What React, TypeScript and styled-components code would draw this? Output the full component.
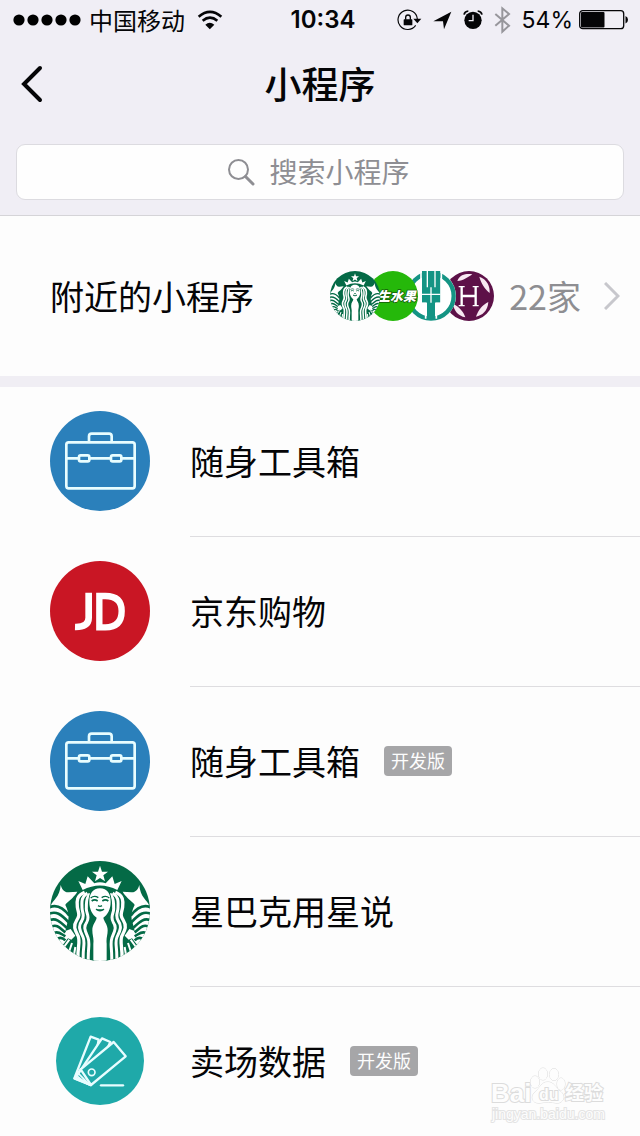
import React from "react";
import styled, { createGlobalStyle } from "styled-components";

const GlobalStyle = createGlobalStyle`
  *, *::before, *::after { box-sizing: border-box; }
  body {
    margin: 0;
    background: #fdfdfd;
    color: #050507;
    font-family: "Noto Sans CJK SC", sans-serif;
  }
`;

const Page = styled.div`
  position: relative;
  width: 100%;
  overflow: hidden;
`;

const Header = styled.header`
  background: #f0eef5;
  border-bottom: 1px solid #d5d4d8;
`;

const StatusBar = styled.div`
  display: grid;
  grid-template-columns: 1fr auto 1fr;
  align-items: center;
  height: 40px;
  padding: 0 11px 0 13px;
  font-family: Inter, "Noto Sans CJK SC", sans-serif;
  font-size: 24px;
  line-height: 40px;
`;

const Carrier = styled.div`
  display: flex;
  align-items: center;
  gap: 8px;
`;

const CarrierName = styled.span`
  font-family: "Noto Sans CJK SC", sans-serif;
  margin-right: 4px;
`;

const Time = styled.time`
  padding-left: 4px;
  font-weight: 600;
`;

const Indicators = styled.div`
  display: flex;
  align-items: center;
  justify-content: flex-end;
  gap: 11px;
`;

const Power = styled.div`
  display: flex;
  align-items: center;
  gap: 6px;
  font-size: 23px;
`;

const NavBar = styled.div`
  display: grid;
  grid-template-columns: 64px 1fr 64px;
  align-items: center;
  height: 88px;
`;

const BackButton = styled.button`
  display: flex;
  justify-content: center;
  padding: 0;
  border: 0;
  background: none;
  color: inherit;
`;

const Title = styled.h1`
  margin: 0;
  padding-bottom: 2px;
  font-size: 37px;
  line-height: 48px;
  font-weight: 500;
  text-align: center;
`;

const SearchArea = styled.div`
  padding: 16px 16px 15px;
`;

const SearchBox = styled.label`
  display: flex;
  align-items: center;
  justify-content: center;
  gap: 15px;
  height: 56px;
  border: 1px solid #dcdbe0;
  border-radius: 9px;
  background: #fefefe;
  color: #8e8e93;
`;

const SearchInput = styled.input`
  width: 144px;
  height: 40px;
  padding: 0 0 2px;
  border: 0;
  outline: 0;
  background: none;
  color: inherit;
  font: inherit;
  font-size: 28px;
  &::placeholder { color: #8e8e93; opacity: 1; }
`;

const NearbyLink = styled.a`
  display: flex;
  align-items: center;
  height: 160px;
  padding: 0 20px 0 50px;
  color: inherit;
  text-decoration: none;
`;

const Label = styled.span`
  padding-bottom: 1px;
  font-size: 34px;
  line-height: 48px;
`;

const Stack = styled.span`
  display: flex;
  margin-left: auto;
`;

const StackItem = styled.span<{ $order: number }>`
  position: relative;
  z-index: ${(p) => p.$order};
  display: flex;
  & + & { margin-left: -12px; }
`;

const Count = styled.span`
  margin: 0 23px 0 15px;
  padding-bottom: 1px;
  color: #8e8e92;
  font-size: 34px;
  line-height: 48px;
`;

const Band = styled.div`
  height: 11px;
  background: #f0eef4;
`;

const List = styled.ul`
  margin: 0;
  padding: 0;
  list-style: none;
`;

const RowLink = styled.a`
  display: flex;
  gap: 40px;
  padding-left: 50px;
  color: inherit;
  text-decoration: none;
`;

const IconSlot = styled.span<{ $last: boolean }>`
  display: flex;
  align-items: center;
  justify-content: center;
  flex: none;
  width: 100px;
  padding-bottom: ${(p) => (p.$last ? 1 : 2)}px;
`;

const RowBody = styled.span<{ $last: boolean }>`
  display: flex;
  flex: 1;
  align-items: center;
  gap: 24px;
  height: ${(p) => (p.$last ? 149 : 150)}px;
  padding-bottom: 1px;
  border-bottom: ${(p) => (p.$last ? "0" : "1px solid #dedde0")};
`;

const Badge = styled.span`
  height: 30px;
  padding: 0 7px;
  border-radius: 4px;
  background: #a6a6a8;
  color: #fdfdfd;
  font-size: 18px;
  line-height: 28px;
`;

const Watermark = styled.div`
  position: absolute;
  right: 32px;
  bottom: 12px;
  display: flex;
`;

const SignalIcon = () => (
  <svg width="68" height="12" viewBox="0 0 68 12" aria-hidden="true">
    {[6, 20, 34, 48, 62].map((x) => (
      <circle key={x} cx={x} cy="6" r="5.6" />
    ))}
  </svg>
);

const WifiIcon = () => (
  <svg width="26" height="20" viewBox="593 30 78 60" fill="none" stroke="#050507" aria-hidden="true">
    <path d="M598 50 Q632 21 666 50" strokeWidth="8" />
    <path d="M610 62 Q632 44 654 62" strokeWidth="8" />
    <path d="M618 74 Q631 63 645 74 L631.500 88 Z" fill="#050507" stroke="none" />
  </svg>
);

const RotationLockIcon = () => (
  <svg width="25" height="24" viewBox="234 24 75 72" fill="none" stroke="#050507" strokeWidth="3.500" aria-hidden="true">
    <path d="M290 76 A29 29 0 1 1 295 57" />
    <path d="M283 56 H307 L295 70 Z" fill="#050507" stroke="none" />
    <rect x="254" y="58" width="26" height="18" rx="2" fill="#050507" stroke="none" />
    <path d="M260 59 V52 A7 7 0 0 1 274 52 V59" strokeWidth="4" />
  </svg>
);

const LocationIcon = () => (
  <svg width="19" height="19" viewBox="342 34 57 57" aria-hidden="true">
    <path d="M397 36 L375 89 L372 65 L343 65 Z" fill="#050507" />
  </svg>
);

const AlarmIcon = () => (
  <svg width="20" height="20" viewBox="433 31 60 60" fill="none" stroke="#050507" aria-hidden="true">
    <circle cx="463" cy="62" r="26" fill="#050507" stroke="none" />
    <path d="M436 45 Q438 35 449 34 M477 34 Q488 35 490 45" strokeWidth="5" />
    <path d="M463 45 V63 H450" stroke="#f0eef5" strokeWidth="4" />
  </svg>
);

const BluetoothIcon = () => (
  <svg width="17" height="28" viewBox="526 20 51 84" fill="none" stroke="#97969b" strokeWidth="6" aria-hidden="true">
    <path d="M530 44 L571 79 L551 97 V27 L571 44 L530 79" />
  </svg>
);

const BatteryIcon = () => (
  <svg width="50" height="20" viewBox="0 0 50 20" aria-hidden="true">
    <rect x="0.700" y="0.700" width="44" height="18" rx="3" fill="none" stroke="#050507" strokeWidth="1.300" />
    <rect x="2" y="2" width="23.500" height="15.400" rx="1" fill="#050507" />
    <path d="M46.500 6 Q49 7 49 9.700 Q49 12.500 46.500 13.500 Z" fill="#050507" />
  </svg>
);

const ToolboxIcon = () => (
  <svg width="100" height="100" viewBox="30 32 300 300" aria-hidden="true">
    <circle cx="180" cy="182" r="150" fill="#2b80bb" />
    <g fill="none" stroke="#e8fdff" strokeWidth="8">
      <rect x="79" y="126" width="205" height="138" rx="7" />
      <path d="M147 126 V108 Q147 100 155 100 H207 Q215 100 215 108 V126" />
      <path d="M80 174 H116 M148 174 H213 M244 174 H284" />
      <rect x="117" y="165" width="31" height="18" rx="5" />
      <rect x="213" y="165" width="31" height="18" rx="5" />
    </g>
  </svg>
);

const JdIcon = () => (
  <svg width="100" height="100" viewBox="30 32 300 300" aria-hidden="true">
    <circle cx="180" cy="182" r="150" fill="#c91624" />
    <path d="M146 127 V202 Q146 231 105 230" fill="none" stroke="#fff" strokeWidth="20" />
    <path d="M178 137 H196 Q245 137 245 182 Q245 231 196 231 H178 Z" fill="none" stroke="#fff" strokeWidth="19" />
  </svg>
);

const SirenHalf = () => (
  <>
    <path d="M62 104 C66 117 73 127 86 126 L112 124 C108 131 103 136 98 142 C88 152 78 158 76 164 C84 180 90 200 82 218 L76 242 L92 236 L106 256 L94 268 L84 264 L62 292 L20 250 L20 172 L32 166 C38 150 60 140 62 104 Z" fill="#fff" />
    <g fill="none" stroke="#046a46" strokeWidth="8">
      <path d="M28 171 C50 161 68 170 88 196" />
      <path d="M28 190 C48 182 62 190 86 216" />
      <path d="M30 209 C48 203 58 212 80 232" />
      <path d="M36 228 C52 222 58 232 76 246" />
      <path d="M44 247 C56 242 62 250 76 258" />
      <path d="M54 265 Q64 258 76 270" />
    </g>
    <g fill="none" stroke="#fff">
      <path d="M72 290 L88 268 M88 302 L96 278 M102 314 L106 290" strokeWidth="6" />
      <path d="M134 126 C110 136 110 152 112 170 C114 186 122 192 110 210 C98 228 106 240 114 256 C122 274 112 290 114 326" strokeWidth="10" />
      <path d="M142 128 C122 142 126 156 126 172 C126 188 136 194 125 212 C112 230 122 244 129 260 C137 278 127 292 130 332" strokeWidth="9" />
      <path d="M150 130 C136 146 140 158 139 174 C138 190 151 198 140 216 C128 232 138 246 144 262 C151 280 143 294 145 336" strokeWidth="9" />
    </g>
  </>
);

const SirenIcon = ({ size, id }: { size: number; id: string }) => (
  <svg width={size} height={size} viewBox="30 32 300 300" aria-hidden="true">
    <clipPath id={id}>
      <circle cx="180" cy="182" r="150" />
    </clipPath>
    <g clipPath={`url(#${id})`}>
      <rect x="30" y="32" width="300" height="300" fill="#046a46" />
      <SirenHalf />
      <g transform="translate(360 0) scale(-1 1)">
        <SirenHalf />
      </g>
      <path d="M180 46 L186 64 L204 64 L190 75 L195 93 L180 83 L165 93 L170 75 L156 64 L174 64 Z" fill="#fff" />
      <path d="M128 119 L115 92 L136 101 L143 78 L163 99 Q180 92 197 99 L217 78 L224 101 L245 92 L232 119 Q180 92 128 119 Z" fill="#fff" />
      <path d="M180 114 C158 114 148 130 148 155 C148 178 158 194 170 202 C168 214 157 222 157 240 C157 256 162 262 160 280 V340 H200 V280 C198 262 203 256 203 240 C203 222 192 214 190 202 C202 194 212 178 212 155 C212 130 202 114 180 114 Z" fill="#fff" stroke="#046a46" strokeWidth="5" paintOrder="stroke" />
      <g fill="none" stroke="#046a46" strokeWidth="4">
        <path d="M152 143 Q163 134 175 142 M185 142 Q197 134 208 143" />
        <path d="M155 152 Q164 145 173 152 M187 152 Q196 145 205 152" strokeWidth="5" />
        <path d="M174 166 Q180 170 186 166" />
        <path d="M168 177 Q180 186 192 177 Q180 181 168 177" />
      </g>
    </g>
  </svg>
);

const SwatchIcon = () => (
  <svg width="90" height="90" viewBox="45 30 270 270" aria-hidden="true">
    <circle cx="180" cy="165" r="132" fill="#1fa9a9" />
    <g fill="#1fa9a9" stroke="#e8fdff" strokeWidth="7" strokeLinejoin="round" strokeLinecap="round">
      <path d="M103 217 L152 92 L176 101 L151 237 Z" />
      <path d="M107 215 L186 97 L211 108 L151 237 Z" />
      <path d="M122 190 L221 108 L257 151 L153 237 Z" />
      <path d="M122 190 L104 217 L153 237" fill="none" />
      <path d="M107 207 L136 230 M113 200 L144 232" fill="none" strokeWidth="5" />
      <circle cx="155" cy="199" r="10" strokeWidth="5" />
      <path d="M183 238 H249" />
    </g>
  </svg>
);

const FruitIcon = () => (
  <svg width="50" height="50" viewBox="0 0 50 50" aria-hidden="true">
    <clipPath id="fruit">
      <circle cx="25" cy="25" r="25" />
    </clipPath>
    <circle cx="25" cy="25" r="25" fill="#25b80a" />
    <text
      x="9"
      y="30"
      clipPath="url(#fruit)"
      fontFamily="Noto Sans CJK SC, sans-serif"
      fontSize="13"
      fontWeight="900"
      fontStyle="italic"
      fill="#fff"
      stroke="#155c0a"
      strokeWidth="1.500"
      paintOrder="stroke"
    >
      生水果
    </text>
  </svg>
);

const ForkIcon = () => (
  <svg width="50" height="50" viewBox="258 33 150 150" aria-hidden="true">
    <circle cx="333" cy="108" r="75" fill="#fff" />
    <circle cx="333" cy="108" r="68" fill="none" stroke="#149484" strokeWidth="13" />
    <path d="M306 28 H361 V128 H345 V178 H321 V128 H306 Z" fill="#149484" />
    <path d="M322 28 V82 M345 28 V82 M306 103 H361 M333 82 V128" fill="none" stroke="#fff" strokeWidth="4" />
    <path d="M303 28 V130 H317 V176 M364 28 V130 H349 V176" fill="none" stroke="#fff" strokeWidth="5" />
  </svg>
);

const HotelIcon = () => (
  <svg width="50" height="50" viewBox="372 33 150 150" aria-hidden="true">
    <circle cx="447" cy="108" r="75" fill="#5d1148" />
    <g fill="#f8e8f2">
      <path d="M412 63 C420 42 440 41 457 43 C443 52 431 62 412 63 Z" />
      <path d="M478 50 C502 58 510 80 509 99 C494 86 484 72 478 50 Z" />
      <path d="M505 126 C503 154 486 166 468 170 C475 150 486 136 505 126 Z" />
      <path d="M436 172 C414 168 402 152 399 132 C417 140 430 154 436 172 Z" />
      <path d="M390 66 C404 84 404 108 392 128 L384 98 Z" />
    </g>
    <path d="M425 80 V137 M467 80 V137 M425 108 H467" fill="none" stroke="#fff" strokeWidth="7" />
    <path d="M416 80 H434 M458 80 H476 M416 137 H434 M458 137 H476" fill="none" stroke="#fff" strokeWidth="4" />
  </svg>
);

const WatermarkLogo = () => (
  <svg width="118" height="58" viewBox="0 0 118 58" aria-hidden="true">
    <g fill="#fdfdfd" stroke="#dcdcdc" strokeWidth="1" paintOrder="stroke">
      <text x="1" y="36" fontFamily="Liberation Sans, sans-serif" fontWeight="700" fontSize="26" strokeWidth="2">Bai</text>
      <ellipse cx="45" cy="16" rx="4.500" ry="6" />
      <ellipse cx="53" cy="8" rx="4.500" ry="6" />
      <ellipse cx="64" cy="8.500" rx="4.500" ry="6" />
      <ellipse cx="71" cy="18" rx="4" ry="6" />
      <path d="M58 16 C51 16 50 22 46 25 C39 31 43 38 50 37 C55 36 62 36 66 37 C73 38 77 30 70 25 C66 22 64 16 58 16 Z" />
      <text x="49" y="34" fontFamily="Liberation Sans, sans-serif" fontWeight="700" fontSize="16" strokeWidth="2">du</text>
      <text x="75" y="34" fontFamily="Noto Sans CJK SC, sans-serif" fontWeight="700" fontSize="19" strokeWidth="2">经验</text>
    </g>
    <text x="2" y="53" fontFamily="Liberation Sans, sans-serif" fontSize="14" fill="#fdfdfd" stroke="#e4e4e4" strokeWidth="2" paintOrder="stroke">
      jingyan.baidu.com
    </text>
  </svg>
);

type Program = { name: string; icon: React.ReactNode; dev?: boolean };

const programs: Program[] = [
  { name: "随身工具箱", icon: <ToolboxIcon /> },
  { name: "京东购物", icon: <JdIcon /> },
  { name: "随身工具箱", icon: <ToolboxIcon />, dev: true },
  { name: "星巴克用星说", icon: <SirenIcon size={100} id="siren-large" /> },
  { name: "卖场数据", icon: <SwatchIcon />, dev: true },
];

const nearby = [<SirenIcon size={50} id="siren-small" />, <FruitIcon />, <ForkIcon />, <HotelIcon />];

export default function App() {
  return (
    <Page>
      <GlobalStyle />
      <Header>
        <StatusBar>
          <Carrier>
            <SignalIcon />
            <CarrierName>中国移动</CarrierName>
            <WifiIcon />
          </Carrier>
          <Time>10:34</Time>
          <Indicators>
            <RotationLockIcon />
            <LocationIcon />
            <AlarmIcon />
            <BluetoothIcon />
            <Power>
              <span>54%</span>
              <BatteryIcon />
            </Power>
          </Indicators>
        </StatusBar>
        <NavBar>
          <BackButton type="button" aria-label="返回">
            <svg width="24" height="38" viewBox="0 0 24 38" fill="none" stroke="currentColor" strokeWidth="4" strokeLinecap="round" aria-hidden="true">
              <path d="M20 3 L4 19 L20 35" />
            </svg>
          </BackButton>
          <Title>小程序</Title>
        </NavBar>
        <SearchArea>
          <SearchBox>
            <svg width="28" height="28" viewBox="0 0 28 28" fill="none" stroke="currentColor" aria-hidden="true">
              <circle cx="11.500" cy="11.500" r="9.500" strokeWidth="2" />
              <path d="M18.500 18.500 L26 26" strokeWidth="3" strokeLinecap="round" />
            </svg>
            <SearchInput type="text" placeholder="搜索小程序" aria-label="搜索小程序" />
          </SearchBox>
        </SearchArea>
      </Header>
      <main>
        <NearbyLink href="#nearby">
          <Label>附近的小程序</Label>
          <Stack>
            {nearby.map((icon, i) => (
              <StackItem key={i} $order={nearby.length - i}>
                {icon}
              </StackItem>
            ))}
          </Stack>
          <Count>22家</Count>
          <svg width="16" height="28" viewBox="0 0 16 28" fill="none" stroke="#c7c7cc" strokeWidth="3" aria-hidden="true">
            <path d="M1 1 L14 14 L1 27" />
          </svg>
        </NearbyLink>
        <Band />
        <List>
          {programs.map((p, i) => {
            const last = i === programs.length - 1;
            return (
              <li key={i}>
                <RowLink href="#program">
                  <IconSlot $last={last}>{p.icon}</IconSlot>
                  <RowBody $last={last}>
                    <Label>{p.name}</Label>
                    {p.dev && <Badge>开发版</Badge>}
                  </RowBody>
                </RowLink>
              </li>
            );
          })}
        </List>
      </main>
      <Watermark>
        <WatermarkLogo />
      </Watermark>
    </Page>
  );
}
